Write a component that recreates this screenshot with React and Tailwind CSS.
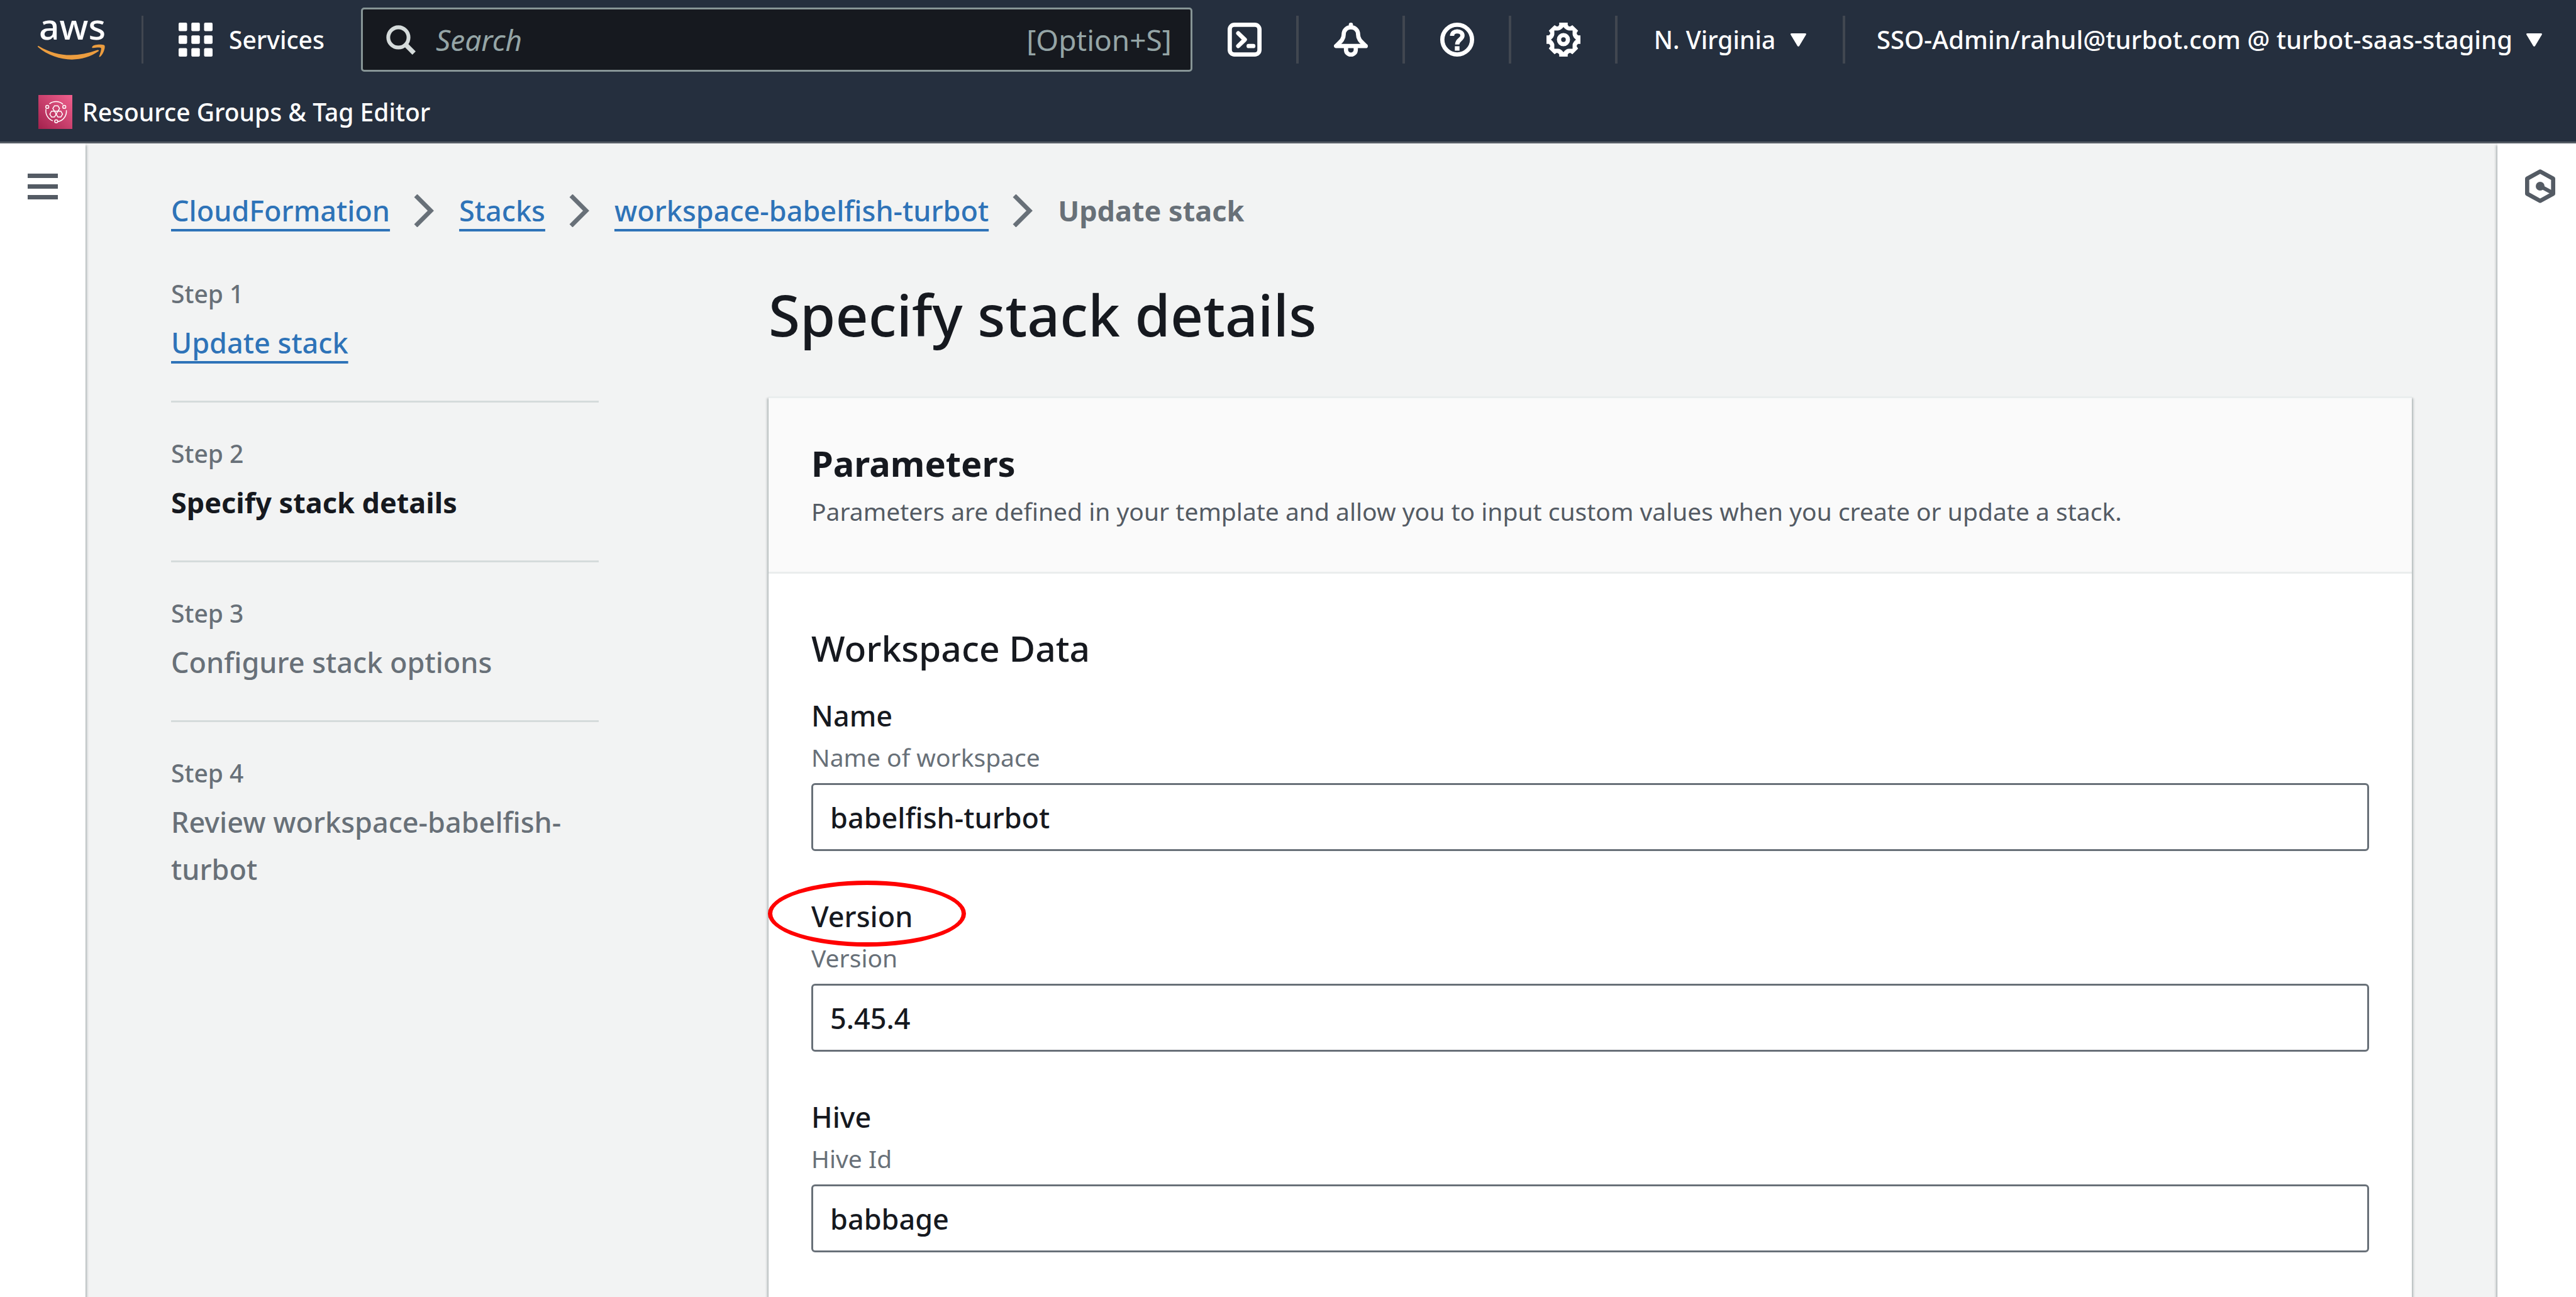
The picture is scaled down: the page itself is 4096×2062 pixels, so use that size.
import React from "react";

const steps = [
  { label: "Step 1", title: "Update stack", kind: "link" },
  { label: "Step 2", title: "Specify stack details", kind: "current" },
  { label: "Step 3", title: "Configure stack options", kind: "next" },
  { label: "Step 4", title: "Review workspace-babelfish-turbot", kind: "next" },
];

const fields = [
  { id: "name", label: "Name", hint: "Name of workspace", value: "babelfish-turbot" },
  { id: "version", label: "Version", hint: "Version", value: "5.45.4", circled: true },
  { id: "hive", label: "Hive", hint: "Hive Id", value: "babbage" },
];

const crumbs = ["CloudFormation", "Stacks", "workspace-babelfish-turbot"];

function AwsLogo() {
  return (
    <svg width="107" height="66" viewBox="28 33 158 97" className="overflow-visible" aria-label="aws">
      <text x="31" y="82" fontSize="84" fontWeight="500" fill="#fff" fontFamily="'Noto Sans', sans-serif">
        aws
      </text>
      <path
        d="M28 98Q28 95.500 31 97C75 123 120 123 168 106C171 105 173 107 170.500 109C130 138 70 134 28.500 99Z"
        fill="#ec9d3f"
      />
      <path
        d="M156 98C160 92 178 92 184 94.500C188 96 184 113 175 121.500C173 123 171.500 122 172.500 120C175 114 178 103 176.500 101C175 99 165 100 158 101C155.500 101.500 155 100 156 98Z"
        fill="#ec9d3f"
      />
    </svg>
  );
}

function GridIcon() {
  const spots = [0, 30, 60];
  return (
    <svg width="54" height="54" viewBox="0 0 80 80" fill="#fff" aria-hidden="true">
      {spots.map((y) => spots.map((x) => <rect key={x + "-" + y} x={x} y={y} width="20" height="20" rx="3" />))}
    </svg>
  );
}

function SearchIcon() {
  return (
    <svg width="47" height="47" viewBox="0 0 70 70" fill="none" stroke="#d5dbdb" aria-hidden="true" className="shrink-0">
      <circle cx="29" cy="29" r="24" strokeWidth="9" />
      <path d="M46 46L66 66" strokeWidth="11" />
    </svg>
  );
}

function Icon({ children }) {
  return (
    <svg
      width="54"
      height="54"
      viewBox="0 0 16 16"
      fill="none"
      stroke="#fff"
      strokeWidth="2"
      strokeLinecap="round"
      strokeLinejoin="round"
      aria-hidden="true"
    >
      {children}
    </svg>
  );
}

function ResourceIcon() {
  return (
    <svg width="54" height="54" viewBox="0 0 80 80" aria-hidden="true">
      <defs>
        <linearGradient id="rg" x1="0" y1="1" x2="1" y2="0">
          <stop offset="0" stopColor="#a3214d" />
          <stop offset="1" stopColor="#f0608e" />
        </linearGradient>
      </defs>
      <rect width="80" height="80" fill="url(#rg)" />
      <g fill="none" stroke="#fff" strokeWidth="2.200">
        <path d="M26 21A25 25 0 0 1 58 22" />
        <path d="M18 33A25 25 0 0 0 34 61" />
        <path d="M66 36A25 25 0 0 1 46 63" />
        <circle cx="21" cy="28" r="3.600" />
        <circle cx="61" cy="28" r="3.600" />
        <circle cx="42" cy="62" r="3.600" />
        <path d="M38 25.500h8l4 6.500l-4 6h-8l-4-6z" />
        <path d="M31 38h7l4 7l-4 7h-7l-4-7z" />
        <path d="M46 38h7l4 7l-4 7h-7l-4-7z" />
      </g>
    </svg>
  );
}

function Caret() {
  return (
    <svg width="25" height="21" viewBox="0 0 25 21" fill="#fff" aria-hidden="true">
      <path d="M2 0H23Q26 0 24.500 2.500L14 20Q12.500 22 11 20L0.500 2.500Q-1 0 2 0Z" />
    </svg>
  );
}

function Divider() {
  return <div className="h-[76px] w-1 shrink-0 bg-[#414750]" />;
}

function ToolButton({ label, children }) {
  return (
    <button type="button" aria-label={label} className="flex h-full w-[165px] shrink-0 items-center justify-center">
      {children}
    </button>
  );
}

function Header() {
  return (
    <header className="border-b-[3px] border-[#545b64] bg-[#252f3e] text-[39px] leading-[60px] text-white">
      <div className="flex h-[126px] items-center">
        <a href="#home" className="ml-[60px] shrink-0">
          <AwsLogo />
        </a>
        <div className="ml-[58px] h-[76px] w-[3px] shrink-0 bg-[#414750]" />
        <button type="button" className="ml-14 flex w-[290px] shrink-0 items-center gap-[26px]">
          <GridIcon />
          <span>Services</span>
        </button>
        <div className="flex h-[102px] w-[1322px] items-center gap-8 rounded-[5px] border-[3px] border-[#879596] bg-[#16191f] pr-[30px] pl-[37px] text-[46px] font-[450] text-[#95a5a6]">
          <SearchIcon />
          <input
            type="search"
            aria-label="Search"
            placeholder="Search"
            className="min-w-0 flex-1 bg-transparent italic outline-none placeholder:text-[#95a5a6]"
          />
          <span>[Option+S]</span>
        </div>
        <div className="flex h-full flex-1 items-center">
          <ToolButton label="CloudShell">
            <Icon>
              <rect x="1" y="1" width="14" height="14" rx="2.200" />
              <path d="M5 5L8.100 8L5 11M9.900 11H12.100" />
            </Icon>
          </ToolButton>
          <Divider />
          <ToolButton label="Notifications">
            <Icon>
              <path d="M8 1V2M8 2.200C5.900 2.200 4.600 3.700 4.600 5.600C4.600 8 3 9 1 11H15C13 9 11.400 8 11.400 5.600C11.400 3.700 10.100 2.200 8 2.200Z" />
              <path d="M5.700 11.500V12.800A2.300 2.300 0 0 0 10.300 12.800V11.500" />
            </Icon>
          </ToolButton>
          <Divider />
          <ToolButton label="Help">
            <Icon>
              <circle cx="8" cy="8" r="7" />
              <path
                d="M5.600 6.200C5.600 4.800 6.700 4.100 8 4.100C9.400 4.100 10.500 4.900 10.500 6.100C10.500 8 8 8 8 10.300"
                strokeLinecap="butt"
              />
              <rect x="6.900" y="11.100" width="2.200" height="2.100" fill="#fff" stroke="none" />
            </Icon>
          </ToolButton>
          <Divider />
          <ToolButton label="Settings">
            <Icon>
              <path
                fill="#fff"
                stroke="none"
                fillRule="evenodd"
                d="M6 0H10V1Q10.300 1.800 11.200 1.800L12.200 1.200L14.900 3.800L14.200 4.900Q14.300 5.800 15 6H16V10H15Q14.300 10.200 14.200 11.100L14.900 12.200L12.200 14.900L11.200 14.200Q10.300 14.200 10 15V16H6V15Q5.700 14.200 4.800 14.200L3.800 14.900L1.100 12.200L1.800 11.100Q1.700 10.200 1 10H0V6H1Q1.700 5.800 1.800 4.900L1.100 3.800L3.800 1.200L4.800 1.800Q5.700 1.800 6 1ZM8 2.100Q6.700 3.700 5.400 3.700H3.700V5.400Q3.700 6.700 2.100 8Q3.700 9.300 3.700 10.600V12.300H5.400Q6.700 12.300 8 13.900Q9.300 12.300 10.600 12.300H12.300V10.600Q12.300 9.300 13.900 8Q12.300 6.700 12.300 5.400V3.700H10.600Q9.300 3.700 8 2.100Z"
              />
              <circle cx="8" cy="8" r="2.100" />
            </Icon>
          </ToolButton>
          <Divider />
          <button type="button" className="flex h-full w-[358px] shrink-0 items-center justify-center gap-6">
            <span>N. Virginia</span>
            <Caret />
          </button>
          <Divider />
          <button type="button" className="ml-auto flex h-full shrink-0 items-center gap-[22px] pr-[54px] text-[40px]">
            <span>SSO-Admin/rahul@turbot.com @ turbot-saas-staging</span>
            <Caret />
          </button>
        </div>
      </div>
      <div className="flex h-[99px] items-center pt-[5px] pl-[61px]">
        <a href="#resource-groups" className="flex items-center gap-4">
          <ResourceIcon />
          <span>Resource Groups &amp; Tag Editor</span>
        </a>
      </div>
    </header>
  );
}

function Breadcrumbs() {
  return (
    <nav aria-label="Breadcrumbs">
      <ol className="flex items-center gap-10 text-[45px] leading-[75px]">
        {crumbs.map((c) => (
          <li key={c} className="flex items-center gap-[38px]">
            <a
              href="#crumb"
              className="text-[#2e73b8] underline decoration-[4px] underline-offset-[12px] [text-decoration-skip-ink:none]"
            >
              {c}
            </a>
            <svg width="32" height="52" viewBox="0 0 32 52" fill="none" stroke="#687078" strokeWidth="7" aria-hidden="true">
              <path d="M3 2L27 26L3 50" />
            </svg>
          </li>
        ))}
        <li className="font-bold text-[#687078]">Update stack</li>
      </ol>
    </nav>
  );
}

function Steps() {
  return (
    <ol className="w-[680px] shrink-0 pt-[65px]">
      {steps.map((s, i) => (
        <li
          key={s.label}
          className={
            i < steps.length - 1
              ? "mb-[51px] border-b-[3px] border-[#d5dbdb] pb-[55px] text-[#687078]"
              : "text-[#687078]"
          }
        >
          <div className="mb-2.5 text-[39px] leading-[60px]">{s.label}</div>
          <div className="text-[45px] leading-[75px]">
            {s.kind === "link" && (
              <a
                href="#step"
                className="text-[#2e73b8] underline decoration-[4px] underline-offset-[12px] [text-decoration-skip-ink:none]"
              >
                {s.title}
              </a>
            )}
            {s.kind === "current" && <span className="font-bold text-[#16191f]">{s.title}</span>}
            {s.kind === "next" && s.title}
          </div>
        </li>
      ))}
    </ol>
  );
}

function Field({ field }) {
  return (
    <div className="relative flex flex-col">
      {field.circled && (
        <div
          aria-hidden="true"
          className="absolute -top-[27px] -left-[69px] h-[105px] w-[315px] rounded-[50%] border-[7px] border-[#ff0000]"
        />
      )}
      <label htmlFor={field.id} className="text-[45px] leading-[60px] text-[#16191f]">
        {field.label}
      </label>
      <p id={field.id + "-hint"} className="mt-1.5 text-[39px] leading-[60px] font-[450] text-[#687078]">
        {field.hint}
      </p>
      <input
        id={field.id}
        type="text"
        defaultValue={field.value}
        aria-describedby={field.id + "-hint"}
        className="mt-[11px] h-[108px] w-full rounded-[6px] border-[3px] border-[#687078] bg-white px-[27px] text-[45px] text-[#16191f] outline-none"
      />
    </div>
  );
}

const sideShadow =
  "z-10 shrink-0 bg-white shadow-[0_3px_3px_0_rgba(0,28,36,0.3),3px_3px_3px_0_rgba(0,28,36,0.15),-3px_3px_3px_0_rgba(0,28,36,0.15)]";

export default function App() {
  return (
    <div className="flex min-h-screen flex-col overflow-hidden bg-[#f2f3f3] font-['Noto_Sans','Open_Sans',sans-serif] font-medium text-[#16191f]">
      <Header />
      <div className="flex flex-1">
        <aside className={sideShadow + " w-[136px]"}>
          <button type="button" aria-label="Open navigation" className="mt-12 ml-11 flex flex-col gap-2.5">
            <span className="h-[7px] w-12 bg-[#545b64]" />
            <span className="h-[7px] w-12 bg-[#545b64]" />
            <span className="h-[7px] w-12 bg-[#545b64]" />
          </button>
        </aside>
        <main className="flex min-w-0 flex-1 flex-col px-[136px] pt-[69px]">
          <Breadcrumbs />
          <div className="flex flex-1 gap-[270px]">
            <Steps />
            <div className="flex min-w-0 flex-1 flex-col pt-[70px]">
              <h1 className="text-[91px] leading-[116px] font-medium">Specify stack details</h1>
              <section className="mt-[72px] flex-1 border-t-[3px] border-[#eaeded] bg-white pb-[71px] shadow-[0_3px_3px_0_rgba(0,28,36,0.3),3px_3px_3px_0_rgba(0,28,36,0.15),-3px_3px_3px_0_rgba(0,28,36,0.15)]">
                <div className="border-b-[3px] border-[#eaeded] bg-[#fafafa] px-[68px] pt-[63px] pb-[66px]">
                  <h2 className="text-[56px] leading-[80px] font-bold">Parameters</h2>
                  <p className="mt-[7px] text-[39px] leading-[60px] font-[450] text-[#545b64]">
                    Parameters are defined in your template and allow you to input custom values when you create or
                    update a stack.
                  </p>
                </div>
                <div className="px-[68px] pt-[78px]">
                  <h3 className="text-[57px] leading-[80px] font-medium">Workspace Data</h3>
                  <form className="mt-[38px] flex flex-col gap-[74px]">
                    {fields.map((f) => (
                      <Field key={f.id} field={f} />
                    ))}
                  </form>
                </div>
              </section>
            </div>
          </div>
        </main>
        <aside className={sideShadow + " w-[125px]"}>
          <button type="button" aria-label="Open tools" className="mt-[41px] ml-11">
            <svg width="48" height="54" viewBox="0 0 72 80" fill="none" stroke="#545b64" strokeWidth="10" strokeLinejoin="round">
              <path d="M36 5L67 22V58L36 75L5 58V22Z" />
              <path d="M36 40L64 55" strokeWidth="9" />
              <circle cx="36" cy="40" r="10.500" fill="#545b64" stroke="none" />
            </svg>
          </button>
        </aside>
      </div>
    </div>
  );
}
